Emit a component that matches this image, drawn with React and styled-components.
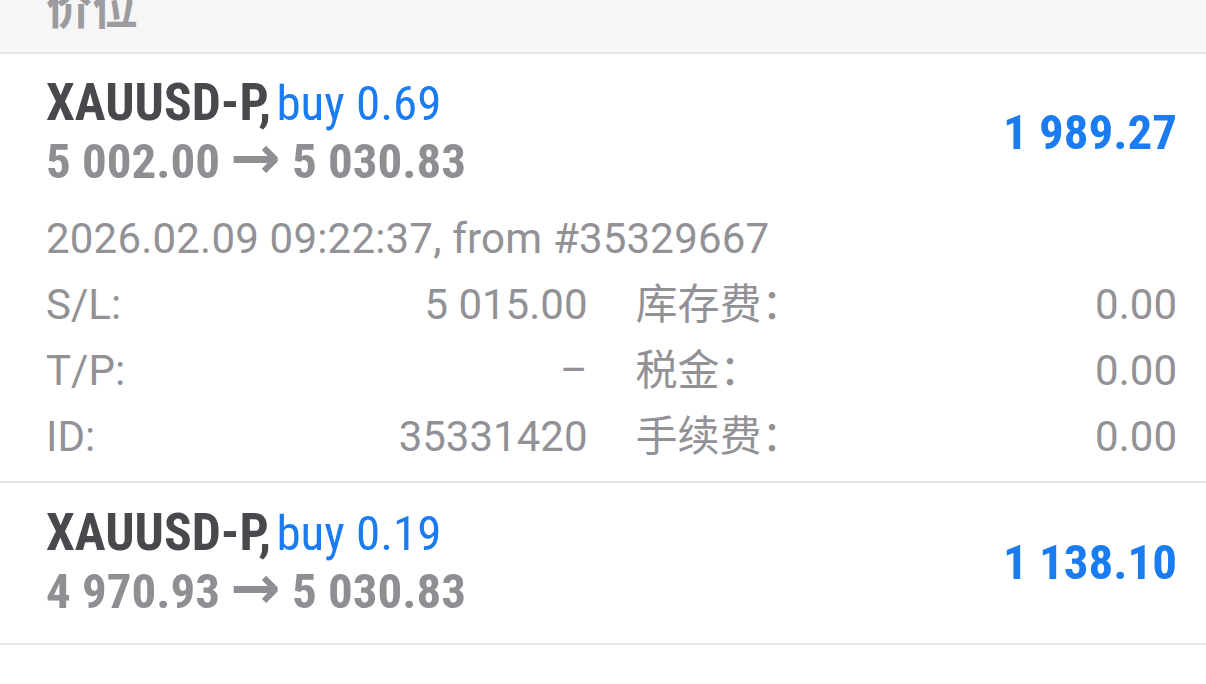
import React from "react";
import styled, { createGlobalStyle } from "styled-components";

const Global = createGlobalStyle`
  html, body { margin: 0; padding: 0; background: #ffffff; }
  body { font-family: Roboto, "Noto Sans CJK SC", sans-serif; -webkit-font-smoothing: antialiased; }
`;

const Page = styled.div`
  width: 1206px;
  height: 684px;
  overflow: hidden;
  background: #ffffff;
`;

const Header = styled.div`
  height: 52px;
  background: #f6f6f6;
  border-bottom: 2px solid #e6e6e6;
  overflow: hidden;
  padding-left: 46px;
`;

const HeaderTitle = styled.div`
  margin-top: -15px;
  font-family: Roboto, "Noto Sans CJK SC", sans-serif;
  font-weight: 700;
  font-size: 46px;
  line-height: 46px;
  color: #9c9ca0;
`;

const Position = styled.div`
  border-bottom: 2px solid #e6e6e6;
  padding: ${(p) => (p.$expanded ? "21px 29px 11px 46px" : "22px 29px 22px 46px")};
`;

const Summary = styled.div`
  display: flex;
  align-items: center;
  justify-content: space-between;
`;

const Lines = styled.div`
  display: flex;
  flex-direction: column;
`;

const Condensed = styled.div`
  font-family: "Roboto Condensed", Roboto, sans-serif;
  font-size: 49px;
  line-height: 58px;
  white-space: nowrap;
`;

const Symbol = styled.span`
  font-weight: 700;
  font-size: 51.5px;
  line-height: 1;
  color: #48484d;
`;

const Side = styled.span`
  font-weight: 400;
  margin-left: -6px;
  color: #1b7cf2;
`;

const Prices = styled(Condensed)`
  font-weight: 700;
  color: #8e8e93;
`;

const Arrow = styled.span`
  font-family: "DejaVu Sans", sans-serif;
  font-weight: 700;
  font-size: 60px;
  line-height: 0;
  margin: 0 0 0 -1px;
`;

const Profit = styled.div`
  font-family: "Roboto Condensed", Roboto, sans-serif;
  font-weight: 700;
  font-size: 49px;
  line-height: 58px;
  color: #1b7cf2;
  white-space: nowrap;
`;

const Details = styled.div`
  margin-top: 15px;
  font-family: Roboto, "Noto Sans CJK SC", sans-serif;
  font-size: 42px;
  line-height: 66px;
  color: #929296;
`;

const Meta = styled.div`
  white-space: nowrap;
  letter-spacing: 0.2px;
`;

const Grid = styled.div`
  display: grid;
  grid-template-columns: 1fr 1fr;
  column-gap: 48px;
`;

const Cell = styled.div`
  display: flex;
  justify-content: space-between;
  white-space: nowrap;
`;

const Label = styled.span``;
const Value = styled.span``;

const fields = [
  ["S/L:", "5 015.00", "库存费：", "0.00"],
  ["T/P:", "–", "税金：", "0.00"],
  ["ID:", "35331420", "手续费：", "0.00"],
];

function PositionRow({ symbol, side, open, current, profit, expanded, meta }) {
  return (
    <Position $expanded={expanded}>
      <Summary>
        <Lines>
          <Condensed>
            <Symbol>{symbol},</Symbol> <Side>{side}</Side>
          </Condensed>
          <Prices>
            {open} <Arrow>→</Arrow> {current}
          </Prices>
        </Lines>
        <Profit>{profit}</Profit>
      </Summary>
      {expanded && (
        <Details>
          <Meta>{meta}</Meta>
          <Grid>
            {fields.map(([l1, v1, l2, v2]) => (
              <React.Fragment key={l1}>
                <Cell>
                  <Label>{l1}</Label>
                  <Value>{v1}</Value>
                </Cell>
                <Cell>
                  <Label>{l2}</Label>
                  <Value>{v2}</Value>
                </Cell>
              </React.Fragment>
            ))}
          </Grid>
        </Details>
      )}
    </Position>
  );
}

export default function App() {
  return (
    <Page>
      <Global />
      <Header>
        <HeaderTitle>价位</HeaderTitle>
      </Header>
      <PositionRow
        symbol="XAUUSD-P"
        side="buy 0.69"
        open="5 002.00"
        current="5 030.83"
        profit="1 989.27"
        expanded
        meta="2026.02.09 09:22:37, from #35329667"
      />
      <PositionRow
        symbol="XAUUSD-P"
        side="buy 0.19"
        open="4 970.93"
        current="5 030.83"
        profit="1 138.10"
      />
    </Page>
  );
}
